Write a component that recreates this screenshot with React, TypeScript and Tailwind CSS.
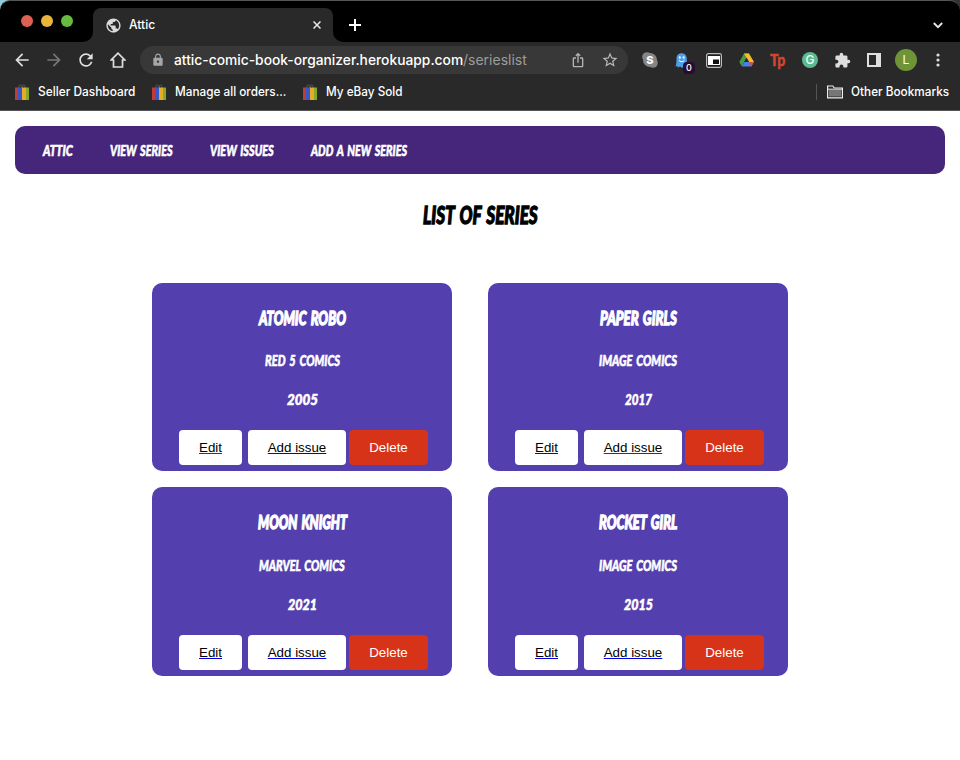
import { useLayoutEffect, useRef, useState } from "react";
import type { ReactNode } from "react";
import {
  MdArrowBack,
  MdArrowForward,
  MdExtension,
  MdIosShare,
  MdLock,
  MdPublic,
  MdRefresh,
  MdStarBorder,
} from "react-icons/md";

/** Condenses or stretches a single line of text to the width of its box. */
function Fit({ width, className = "", children }: { width: number; className?: string; children: ReactNode }) {
  const ref = useRef<HTMLSpanElement>(null);
  const [scale, setScale] = useState(1);
  useLayoutEffect(() => {
    if (ref.current) setScale(width / ref.current.offsetWidth);
  }, [width]);
  return (
    <span className={`block shrink-0 whitespace-nowrap ${className}`} style={{ width }}>
      <span ref={ref} className="block w-max origin-left" style={{ transform: `scaleX(${scale})` }}>
        {children}
      </span>
    </span>
  );
}

const comic = "font-['Lato',sans-serif] font-black italic uppercase [word-spacing:2px] [-webkit-text-stroke:0.6px_currentColor]";
const comicHeading = "font-['Lato',sans-serif] font-black italic uppercase [word-spacing:2px] [-webkit-text-stroke:1.3px_currentColor]";

function ShoppingBag() {
  return (
    <svg className="block h-4 w-[14px] shrink-0" viewBox="0 0 14 16">
      <path d="M4 4V2.2Q4 .8 5.2.8T6.500 2.200V4M7.500 4V2.200Q7.500.8 8.700.8T10 2.200V4" fill="none" stroke="#555" strokeWidth="1" />
      <path d="M0 3.500h4V16H0z" fill="#c13b34" />
      <path d="M3 3.500h4V16H3z" fill="#3559cb" />
      <path d="M7 3.500h4V16H7z" fill="#e6ac27" />
      <path d="M11 3.500h3V16h-3z" fill="#85a72b" />
    </svg>
  );
}

function Bookmark({ label, width }: { label: string; width: number }) {
  return (
    <div className="flex items-center gap-[9px]">
      <ShoppingBag />
      <Fit width={width}>{label}</Fit>
    </div>
  );
}

function TabStrip() {
  return (
    <div className="flex h-[42px] items-end rounded-t-[10px] border-t border-[#555] bg-black">
      <div className="mb-[15px] ml-[21px] flex w-[62px] shrink-0 gap-2">
        <i className="size-3 rounded-full bg-[#dd6153]" />
        <i className="size-3 rounded-full bg-[#e9b53a]" />
        <i className="size-3 rounded-full bg-[#68bb42]" />
      </div>
      <svg className="block size-[10px] shrink-0" viewBox="0 0 10 10">
        <path d="M10 0v10H0A10 10 0 0 0 10 0" fill="#292929" />
      </svg>
      <div className="flex h-[34px] w-[240px] shrink-0 items-center rounded-t-lg bg-[#292929] pl-3 text-[12.5px] font-medium text-white">
        <MdPublic className="size-[17px] text-[#dadbdc]" />
        <Fit width={26} className="ml-[7px]">Attic</Fit>
        <svg className="ml-auto mr-[12px] size-2" viewBox="0 0 8 8">
          <path d="m.5.5 7 7m0-7-7 7" stroke="#e8e8e8" strokeWidth="1.5" />
        </svg>
      </div>
      <svg className="block size-[10px] shrink-0" viewBox="0 0 10 10">
        <path d="M0 0v10h10A10 10 0 0 1 0 0" fill="#292929" />
      </svg>
      <svg className="mb-[11px] ml-[6px] size-3" viewBox="0 0 12 12">
        <path d="M6 0v12M0 6h12" stroke="#fff" strokeWidth="2" />
      </svg>
      <svg className="mb-[13px] ml-auto mr-[17px] h-[7px] w-[10px]" viewBox="0 0 10 7">
        <path d="m.8 1 4.200 4.200L9.200 1" fill="none" stroke="#e8e8e8" strokeWidth="1.8" />
      </svg>
    </div>
  );
}

function Extensions() {
  return (
    <div className="flex h-full items-center">
      <div className="relative ml-[14px] size-4 shrink-0">
        <svg className="block size-4" viewBox="0 0 16 16">
          <circle cx="5" cy="5" r="4.800" fill="#858585" />
          <circle cx="11" cy="11" r="4.800" fill="#858585" />
          <circle cx="8" cy="8" r="7" fill="#858585" />
        </svg>
        <span className="absolute inset-0 flex items-center justify-center text-[11px] font-extrabold leading-none text-white">S</span>
      </div>
      <div className="relative ml-[17px] h-[15px] w-[13px] shrink-0">
        <svg className="block h-[15px] w-[13px]" viewBox="0 0 13 15">
          <path d="M1.500 6C1.500 2.300 3.500.2 6.600.2s5.200 2.100 5.200 5.800v3.200l1 3-2.200 1.300-2-.3-1.500 1.700-1.900-1.500-2.300 1.200-.6-1.500-1.900.3C1.300 12 1.500 9 1.500 6" fill="#4e9fe8" />
          <ellipse cx="4.800" cy="4.500" rx="1" ry="1.300" fill="#fff" />
          <ellipse cx="8.600" cy="4.500" rx="1" ry="1.300" fill="#fff" />
          <path d="M4 7.200c1 2 4.500 2 5.500 0" fill="none" stroke="#fff" />
        </svg>
        <span className="absolute left-[8px] top-[9px] flex h-3 w-3 items-center justify-center rounded-sm bg-[#280d31] text-[9px] font-medium text-white">0</span>
      </div>
      <svg className="ml-[18px] h-[15px] w-4 shrink-0" viewBox="0 0 16 15">
        <rect x=".6" y=".6" width="14.800" height="13.800" rx="1.800" fill="#1e1e1e" stroke="#bbb" strokeWidth="1.200" />
        <path d="M2 3h12v9H2z" fill="#fff" />
        <path d="M7 6.500h6V11H7z" fill="#111" />
      </svg>
      <svg className="ml-[17px] h-[14px] w-[15px] shrink-0" viewBox="0 0 15 14">
        <path d="M5 .5h5L7.500 5 3 13.500.3 9z" fill="#479b49" />
        <path d="M5 .5h5L15 9h-5z" fill="#f4be2b" />
        <path d="M3 13.500 5.500 9H15l-2.700 4.500z" fill="#4c7cf0" />
        <path d="m12.300 13.500-2.500-4.400H15z" fill="#dc4d3b" />
        <path d="M7.500 4.800 10 9H5.100z" fill="#292929" />
      </svg>
      <Fit width={15} className="ml-[16px] font-['Lato',sans-serif] text-[16px] font-black leading-4 text-[#d34432] [-webkit-text-stroke:0.4px_currentColor]">Tp</Fit>
      <div className="ml-[17px] flex size-4 shrink-0 items-center justify-center rounded-full bg-[#5db990] text-[12px] font-medium leading-none text-[#effff7]">G</div>
      <MdExtension className="ml-[16px] size-[17px] shrink-0 text-[#dedede]" />
      <svg className="ml-[16px] size-[14px] shrink-0" viewBox="0 0 14 14">
        <path d="M0 0h14v14H0zM2 2v10h7V2z" fill="#dfdfdf" fillRule="evenodd" />
      </svg>
      <div className="ml-[14px] flex size-[22px] shrink-0 items-center justify-center rounded-full bg-[#6e9437] text-[12px] text-white">L</div>
      <svg className="ml-[19px] h-[14px] w-[4px] shrink-0" viewBox="0 0 4 14">
        <circle cx="2" cy="2" r="1.600" fill="#ddd" />
        <circle cx="2" cy="7" r="1.600" fill="#ddd" />
        <circle cx="2" cy="12" r="1.600" fill="#ddd" />
      </svg>
    </div>
  );
}

function Toolbar() {
  return (
    <div className="flex h-9 items-center bg-[#292929] text-[#dedede]">
      <MdArrowBack className="ml-[12px] size-5 shrink-0" />
      <MdArrowForward className="ml-[12px] size-5 shrink-0 text-[#777]" />
      <MdRefresh className="ml-[12px] size-5 shrink-0" />
      <svg className="ml-[14px] h-4 w-4 shrink-0" viewBox="0 0 16 16">
        <path d="M8 1.200 1.200 8H3.500v7h9V8h2.300z" fill="none" stroke="#dedede" strokeWidth="1.700" />
      </svg>
      <div className="ml-[14px] flex h-7 w-[488px] shrink-0 items-center rounded-full bg-[#383838] pl-[11px] text-[14px]">
        <MdLock className="size-[14px] text-[#a4a6a9]" />
        <Fit width={289} className="ml-[9px] pb-px font-medium text-white">attic-comic-book-organizer.herokuapp.com</Fit>
        <Fit width={64} className="pb-px text-[#9c9c9c]">/serieslist</Fit>
        <MdIosShare className="ml-auto size-4 text-[#b3b3b3]" />
        <MdStarBorder className="ml-[15px] mr-[9px] size-[18px] text-[#b9b9b9]" />
      </div>
      <Extensions />
    </div>
  );
}

function BookmarksBar() {
  return (
    <div className="flex h-[33px] items-start border-b border-[#555] bg-[#292929] pl-[15px] pt-[6px] text-[12.5px] font-medium leading-4 text-white">
      <div className="flex gap-[17px]">
        <Bookmark label="Seller Dashboard" width={97} />
        <Bookmark label="Manage all orders..." width={111} />
        <Bookmark label="My eBay Sold" width={77} />
      </div>
      <div className="ml-auto mr-[11px] flex items-center">
        <i className="h-4 w-px bg-[#555]" />
        <svg className="ml-[10px] h-[14px] w-4" viewBox="0 0 16 14">
          <path d="M.6 12.900V1h5.200l1.500 2h8.100v9.900z" fill="#292929" stroke="#eee" strokeWidth="1.200" />
          <path d="M2 5h12v6.500H2z" fill="#777" />
          <path d="M1 4.200h14" stroke="#eee" />
        </svg>
        <Fit width={98} className="ml-2">Other Bookmarks</Fit>
      </div>
    </div>
  );
}

type Series = {
  title: string;
  publisher: string;
  year: string;
  widths: [number, number, number];
  editVisited?: boolean;
  addVisited?: boolean;
};

const rows: Series[][] = [
  [
    { title: "Atomic Robo", publisher: "Red 5 Comics", year: "2005", widths: [87, 75, 31], editVisited: true },
    { title: "Paper Girls", publisher: "Image Comics", year: "2017", widths: [77, 78, 27], addVisited: true },
  ],
  [
    { title: "Moon Knight", publisher: "Marvel Comics", year: "2021", widths: [89, 86, 29] },
    { title: "Rocket Girl", publisher: "Image Comics", year: "2015", widths: [78, 78, 29] },
  ],
];

function SeriesCard({ series, second }: { series: Series; second: boolean }) {
  const link = "flex h-[35px] items-center justify-center rounded-[4px] bg-white text-black underline underline-offset-1";
  return (
    <article className={`flex w-[300px] flex-col items-center rounded-[10px] bg-[#533fae] text-white ${second ? "h-[189px]" : "h-[188px]"}`}>
      <Fit width={series.widths[0]} className={`mt-[23px] text-[19px] leading-6 ${comicHeading}`}>{series.title}</Fit>
      <Fit width={series.widths[1]} className={`text-[15.5px] leading-5 ${second ? "mt-[21px]" : "mt-5"} ${comic}`}>{series.publisher}</Fit>
      <Fit width={series.widths[2]} className={`mt-[19px] text-[15.5px] leading-5 ${comic}`}>{series.year}</Fit>
      <div className="ml-[3px] mt-[21px] flex font-['Liberation_Sans',Arial,sans-serif] text-[13.333px]">
        <a className={`w-[63px] ${link} ${series.editVisited ? "decoration-[#551a8b]" : "decoration-[#0000ee]"}`}>Edit</a>
        <a className={`ml-[6px] w-[98px] ${link} ${series.addVisited ? "decoration-[#551a8b]" : "decoration-[#0000ee]"}`}>Add issue</a>
        <button className="ml-[3px] h-[35px] w-[79px] rounded-[4px] bg-[#d73318] text-white">Delete</button>
      </div>
    </article>
  );
}

export default function App() {
  return (
    <div className="h-[760px] w-[960px] overflow-hidden bg-white">
      <header className="bg-[linear-gradient(to_right,#93cbd9_50%,#333_50%)] font-['Inter',sans-serif]">
        <TabStrip />
        <Toolbar />
        <BookmarksBar />
      </header>
      <nav className={`mx-[15px] mt-[15px] flex h-12 items-center rounded-[10px] bg-[#46267a] pl-7 text-[15.5px] leading-5 text-white ${comic}`}>
        <Fit width={30}>Attic</Fit>
        <Fit width={63} className="ml-[37px]">View Series</Fit>
        <Fit width={64} className="ml-[37px]">View Issues</Fit>
        <Fit width={96} className="ml-[37px]">Add a New Series</Fit>
      </nav>
      <main className="flex flex-col items-center">
        <h1 className="h-[109px] pl-px pt-[26px]">
          <Fit width={115} className={`text-[24px] leading-[30px] text-black ${comicHeading}`}>List of Series</Fit>
        </h1>
        <div className="mr-5 grid grid-cols-2 gap-x-9 gap-y-4">
          {rows.flatMap((row, i) => row.map((s) => <SeriesCard key={s.title} series={s} second={i === 1} />))}
        </div>
      </main>
    </div>
  );
}
